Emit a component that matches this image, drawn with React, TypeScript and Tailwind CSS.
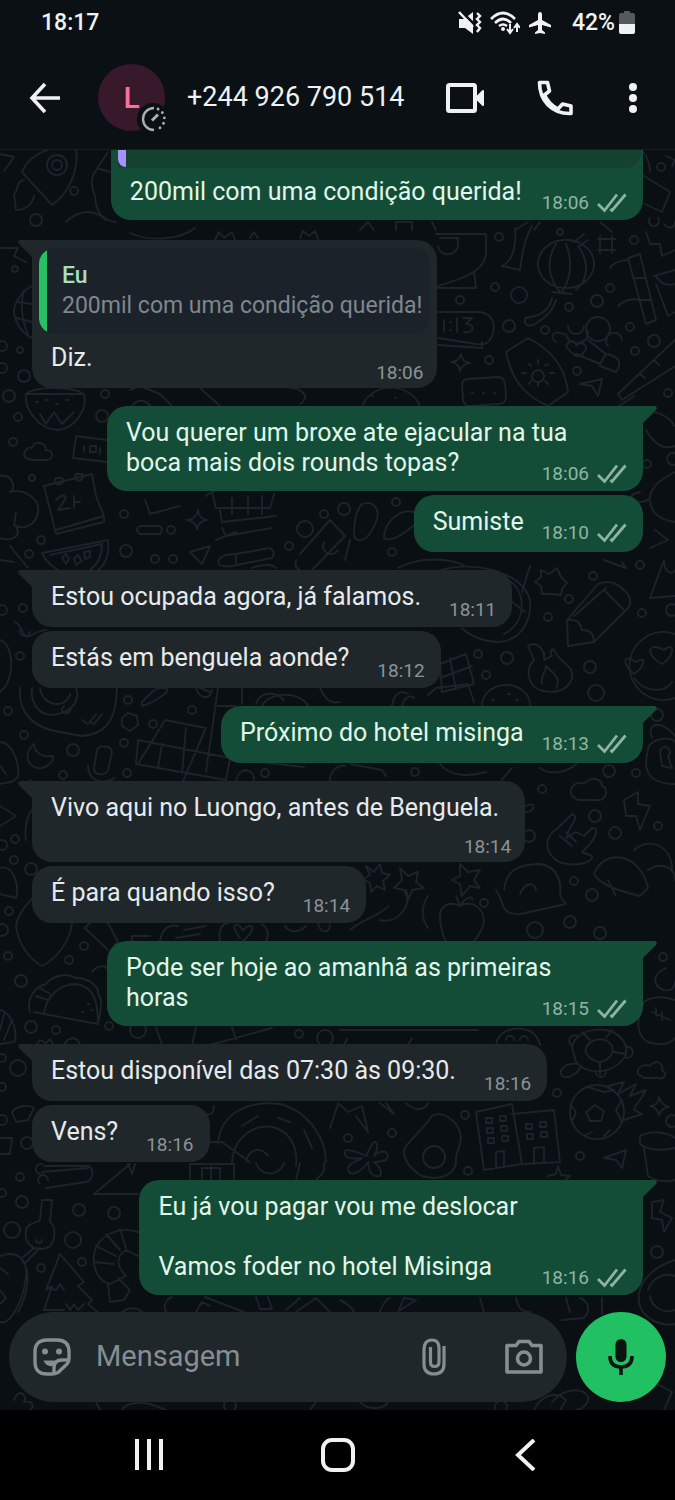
import type { ReactNode } from "react";
import { clsx } from "clsx";

type Message = {
  text: string;
  time: string;
  out?: boolean;
  first?: boolean;
  layout?: "row" | "wide" | "stacked";
};

const messages: Message[] = [
  {
    text: "Vou querer um broxe ate ejacular na tua\nboca mais dois rounds topas?",
    time: "18:06",
    out: true,
    first: true,
    layout: "wide",
  },
  { text: "Sumiste", time: "18:10", out: true },
  { text: "Estou ocupada agora, já falamos.", time: "18:11", first: true },
  { text: "Estás em benguela aonde?", time: "18:12" },
  { text: "Próximo do hotel misinga", time: "18:13", out: true, first: true },
  {
    text: "Vivo aqui no Luongo, antes de Benguela.",
    time: "18:14",
    first: true,
    layout: "stacked",
  },
  { text: "É para quando isso?", time: "18:14" },
  {
    text: "Pode ser hoje ao amanhã as primeiras\nhoras",
    time: "18:15",
    out: true,
    first: true,
    layout: "wide",
  },
  { text: "Estou disponível das 07:30 às 09:30.", time: "18:16", first: true },
  { text: "Vens?", time: "18:16" },
  {
    text: "Eu já vou pagar vou me deslocar\n\nVamos foder no hotel Misinga",
    time: "18:16",
    out: true,
    first: true,
  },
];

// x, y, radius
const bubbles = [
  [74, 191, 4], [36, 220, 6], [15, 269, 3], [20, 350, 3], [24, 376, 6], [9, 396, 6], [105, 394, 4], [102, 416, 6],
  [18, 417, 4], [13, 442, 4], [32, 478, 3], [2, 346, 5], [2, 368, 5], [499, 237, 4], [460, 300, 4], [495, 287, 4],
  [519, 295, 8], [509, 326, 6], [545, 330, 4], [569, 307, 4], [597, 301, 6], [610, 288, 4], [630, 327, 4],
  [654, 341, 6], [635, 351, 4], [577, 371, 4], [489, 360, 4], [668, 393, 4], [634, 240, 4], [560, 232, 3],
  [344, 509, 6], [396, 502, 4], [392, 552, 4], [647, 464, 4], [673, 459, 6], [661, 167, 4], [124, 514, 4],
  [41, 540, 4], [29, 554, 4], [126, 551, 6], [171, 530, 4], [155, 559, 4], [173, 559, 4], [289, 546, 4],
  [305, 529, 8], [324, 514, 4], [23, 608, 4], [2, 610, 5], [20, 656, 4], [128, 700, 4], [8, 711, 4], [24, 735, 4],
  [73, 750, 6], [124, 743, 4], [153, 724, 4], [192, 710, 4], [63, 775, 4], [127, 773, 4], [265, 773, 4],
  [593, 576, 4], [569, 599, 4], [642, 613, 4], [548, 617, 4], [478, 654, 4], [507, 658, 6], [486, 675, 4],
  [590, 667, 6], [596, 693, 8], [640, 565, 4], [672, 610, 6], [657, 715, 6], [609, 771, 6], [636, 773, 4],
  [542, 789, 4], [595, 816, 6], [615, 833, 6], [658, 826, 4], [574, 881, 4], [415, 772, 4], [529, 836, 6],
  [15, 839, 4], [2, 845, 5], [14, 860, 4], [31, 869, 6], [9, 911, 4], [2, 930, 6], [8, 956, 4], [84, 946, 4],
  [69, 960, 4], [21, 981, 6], [31, 1027, 6], [56, 1030, 4], [109, 1026, 4], [138, 1030, 8], [299, 1034, 4],
  [325, 1038, 8], [18, 1068, 8], [2, 1058, 4], [2, 1087, 4], [27, 1143, 6], [2, 1120, 5], [484, 903, 4],
  [592, 895, 6], [535, 930, 8], [570, 922, 6], [600, 933, 6], [663, 957, 4], [557, 1093, 4], [465, 1115, 4],
  [348, 1138, 4], [392, 1133, 4], [468, 1171, 4], [580, 1156, 4], [672, 1121, 6], [20, 1177, 4], [22, 1202, 6],
  [79, 1210, 6], [114, 1213, 6], [12, 1230, 8], [73, 1240, 8], [82, 1262, 4], [41, 1268, 4], [2, 1193, 4],
  [657, 1252, 6],
];

const doodles = [
  // rocket, paper plane and cactus
  "M22 172C28 158 40 151 55 148H76C79 172 68 194 52 205ZM22 172L52 205M67 165a10 10 0 1 1-20 0a10 10 0 1 1 20 0M62 165a5 5 0 1 1-10 0a5 5 0 1 1 10 0M24 180C14 182 20 190 14 194L16 210C24 210 32 206 34 196M0 154L14 157L4 171",
  "M95 172C90 178 92 190 95 196C96 212 102 220 116 222M95 172L108 152M97 168L110 172M66 222C80 208 96 210 106 220",
  // globe and stars on the left
  "M32 286C20 292 14 304 14 312C16 326 24 334 32 338M18 302L32 304M16 318L32 322M24 290C20 304 22 322 28 334M0 248H18L14 256L26 262",
  "M130 233C150 242 180 240 195 228M215 240l4-8 5 6 8-6 3 8M250 238l4-6 4 6M300 238l3-7 6 5 6-5 3 8",
  // monitor and megaphone
  "M436 234H486V252C486 268 472 276 438 286M438 288H476L474 272M440 238H458V246C456 256 440 258 438 246M515 228C517 246 512 262 502 266L520 270C522 256 524 240 532 226",
  // paper lantern
  "M538 262A28 24 0 1 0 594 266A28 24 0 1 0 538 262M556 244C546 260 548 278 560 292M566 244C572 258 572 278 562 292M578 246C590 262 588 280 576 290M574 242l10-8M580 246l8-6M552 292L572 294M552 298C550 308 542 316 526 318C522 326 530 328 538 322C548 316 554 308 556 300",
  // sparkle square and maple leaf
  "M600 236V253M612 236V253M598 239H615M598 250H615M646 232l4 12 10 0 2 12 13-6",
  // bamboo
  "M628 258L640 254L656 320L646 324ZM634 278H646M638 300H650M628 260C620 260 612 264 610 268M618 306C624 300 632 298 640 300M654 276L675 270M656 284L668 316L675 312M656 276C660 284 668 286 675 284",
  // alarm clock face
  "M438 312H480C494 314 496 326 492 336C488 346 482 344 476 344L438 338M438 345L482 348V342M444 320V332M450 322h1M450 330h1M457 318V332M463 318H472L466 324C476 324 474 334 464 332",
  // flowers
  "M566 334a11 10 0 1 0 22-2M584 326a8 8 0 1 1-16 0M610 328a12 12 0 1 0-24 2a12 12 0 0 0 24-2M622 340a8 8 0 1 0-14 6M556 342C548 336 554 330 564 334M566 346C570 338 578 342 576 346C582 340 590 346 584 352C580 358 574 358 566 346M588 340L606 354L600 364L576 354M606 354C620 356 622 364 616 372L600 366",
  // sun cream
  "M506 352L528 338C556 352 566 372 568 392L548 406C526 396 512 382 506 352M533 373a6 6 0 1 0 10 0a6 6 0 0 0-10 0M526 373h-4M554 373h-4M538 360v4M538 386v-4M529 364l2 2M548 384l-3-3M548 364l-3 2M529 384l2-3",
  "M462 383Q464 379 468 379L498 377Q504 377 505 384L506 396Q506 403 500 404L470 406Q464 406 463 400ZM472 393h1M483 393h1M494 393h1M451 362q8 0 10-8q1 8 9 9q-8 1-10 8q-1-8-9-9M580 384L602 379L598 396L592 386Z",
  "M675 340L618 394L622 400L675 366M640 374l5 4M654 360l5 5M616 408L634 396M362 407A30 26 0 0 1 420 407M372 396h1M395 398h1",
  // fruit bowl, cloud and ticket
  "M26 394L84 394C88 408 76 428 58 430C40 430 24 410 26 394M26 394C36 386 72 386 84 394M36 402h2M46 400h2M56 404h2M66 400h2M40 414L46 424L54 412L62 424L74 412",
  "M26 458C22 454 26 446 32 448C34 440 46 442 46 450C54 450 54 460 46 460H32ZM107 440L76 436L73 458L107 462M84 446v6M90 446h6v6h-6ZM100 448v6",
  "M44 486L92 474L96 496L104 516L104 522L56 534ZM56 530L104 516M56 478a4 4 0 1 0 6 0ZM76 474a4 4 0 1 0 6 0ZM56 500Q64 492 66 498L58 510L70 508M74 496V508M74 502H80",
  "M0 476C14 474 16 490 10 492C26 488 40 500 38 512C36 524 26 530 16 526C22 536 12 542 0 538M16 512L14 526M0 560L14 562M10 546L28 568M132 406C140 396 150 402 152 410M130 390L140 386L160 394L172 406M200 388L220 406M290 388C300 388 312 396 300 404",
  // watermelon
  "M42 553L108 540C110 556 104 566 98 570M50 555L102 544C102 556 98 564 90 570M42 553C46 562 52 566 58 570M62 558l4-4 3 5-3 5ZM74 558l4-3 4 6-6 4ZM84 552l6-1 0 6-5 2Z",
  "M140 526H160Q164 530 160 534H140Q134 530 140 526M186 520q10 0 12-10q1 9 9 10q-8 1-10 9q-1-8-11-9M190 552L210 546L202 564ZM145 500L150 514L180 506",
  // easel and tools
  "M212 492L216 508H270L274 494M220 510L222 522L276 516M222 528L226 536L272 528M232 498V514M248 496V514M262 496V514M216 540L236 532M218 562Q220 554 236 554L270 548Q276 552 272 558L232 566Q220 568 218 562M236 554V565M252 568Q270 562 276 568",
  "M300 554L330 520L345 536L312 570M324 542a8 8 0 1 0 14 8M296 560q-2 8 4 10M350 540L345 560M362 504C376 500 382 512 374 526C368 540 358 544 354 536C354 520 356 510 362 504M384 538C384 522 400 508 414 512M384 538C392 544 408 530 416 524",
  "M206 496C210 492 214 492 216 490M640 492C620 496 640 508 650 498C650 486 666 476 675 472M650 500C650 512 660 520 675 522M655 530L668 540L650 548M646 412C660 410 672 420 674 426M646 430C654 444 664 450 675 446",
  // compass, pencil
  "M438 571C470 560 522 570 530 600C532 622 520 640 500 642C484 642 470 636 462 628M508 580C524 588 530 620 504 634M398 568C420 556 450 558 465 566M510 600L525 612M530 566L522 592",
  "M567 620L598 584Q612 578 624 590Q634 600 628 608L594 642L568 646ZM604 590L624 610M574 616L606 588M596 640L626 610M567 620Q580 618 582 630Q594 630 594 642",
  "M541 570l8 4 8-6 4 9 6 6-5 6-1 6-9-1-10 0-1-8-6-4 6-5ZM650 598L664 560M650 598L675 596M664 560C664 572 672 576 675 570M604 560L626 568L622 562",
  // flame
  "M528 646C536 640 546 650 544 660L552 656C548 650 554 648 554 650C560 664 574 664 572 678C568 692 552 694 540 690C526 684 526 668 534 660L528 646M542 684C540 676 546 672 546 666C552 672 562 678 556 688",
  // heart eyed face
  "M675 634A34 34 0 1 0 675 698M636 662C620 652 624 666 634 674C644 668 648 654 636 662M664 650C644 640 648 658 662 664C674 658 676 640 664 650M634 678C644 692 664 694 672 682",
  "M428 695L436 688L468 684L474 702M440 664L466 654L474 684L442 692ZM450 658L456 690M440 678L472 666M392 706C394 692 402 690 408 694M402 706C404 698 410 694 414 698M482 705A24 20 0 0 1 530 705M492 700h2M508 694h2M516 700h2",
  // padlock and shield
  "M648 748C652 738 672 736 675 742M648 750C642 772 650 784 675 784M652 738C646 724 660 718 675 736M660 752a5 5 0 1 1 8 4L672 768L662 766Z",
  // washing machine and moon
  "M20 688C18 714 34 728 60 732L82 736C104 734 114 722 116 700L117 688M32 688C30 706 42 718 58 714C74 710 80 700 76 688M40 688C42 706 66 710 70 694M64 706a4 4 0 1 0 6 2M82 720l6 4 8-10M90 722l4 2 8-10M0 640C14 644 16 680 0 692M15 622C24 626 22 640 30 636C38 630 40 632 46 630M20 630a5 5 0 1 0 10 2",
  "M34 744C22 754 28 770 42 768C50 766 54 760 53 756C42 758 34 752 34 744M0 742C12 742 20 764 18 776C14 784 6 782 0 784M0 766L6 774M97 750C100 744 112 746 112 752L108 770C106 776 94 776 94 768ZM88 766C88 780 102 786 114 778",
  // polygon, chili, squares
  "M122 718l6-5 9 3 1 9-8 6-8-5ZM142 702C150 694 156 686 164 688C176 690 150 704 142 706ZM200 688L210 692M196 688C200 700 210 700 212 690M165 720L206 728L180 788M165 720L138 764M138 740L230 758L226 780L136 764ZM162 744L158 768M186 728L182 774M218 688L206 772M218 706L236 706M242 688V704M256 704C260 692 274 690 284 700M262 706C268 692 300 690 308 706M320 688C326 700 330 704 340 702",
  "M236 780C240 766 254 768 254 780M330 780C330 770 340 764 345 766M260 762L304 767M0 806L16 816L0 826M26 840C24 826 28 812 34 808M30 780l4 4M440 764C452 778 470 776 486 772M500 782L512 768M540 768C550 776 568 772 576 764M350 764L382 770L386 776",
  // cloud, bolt, rock hand
  "M572 796C568 788 576 780 584 784C590 776 602 778 602 786C610 788 606 802 596 800H578ZM624 800L638 792L638 804L650 806L640 830L636 816L626 816Z",
  "M558 828L572 814C578 816 574 822 570 828L566 838L576 832L584 836L592 828C600 828 596 836 590 844L582 852L592 856C594 864 568 868 556 860C546 852 542 838 558 828M560 836L572 846M566 832L576 842M526 806C536 800 536 812 526 812",
  "M594 874C604 848 640 852 648 888L640 896C624 892 600 886 594 874M634 850C650 836 672 846 672 870M648 870C660 862 675 866 675 880M608 880L616 896M504 890C506 872 516 864 540 864C556 866 562 880 560 896L566 904L520 914C500 916 504 900 496 890M520 894C524 884 534 880 536 890",
  // stars and flowers in the middle
  "M366 866l8 6 6-8 2 9 8 2-7 6 2 9-8-4-6 6-1-9-7-4 7-4ZM400 868l8 8 10-4-2 10 8 6-12 2-4 10-4-10-10-2 8-8ZM460 864l8 8 12-2-6 10 6 8-10-2-8 10-2-12-8-4 8-4ZM440 915C440 908 448 900 460 906C470 900 484 906 484 922C482 932 478 936 474 941M440 915C440 926 442 934 446 941M460 906L456 896M460 906C466 896 474 896 472 900M380 920C400 924 412 904 406 890M388 906C380 916 364 918 350 930M428 896C420 908 422 920 428 928",
  "M0 868C12 864 20 884 16 898L0 894M16 926C18 910 32 900 34 896M16 926C18 944 30 960 42 966C58 958 70 940 72 924M85 928L108 950M85 928L90 923M108 923L118 942L114 946M132 941V936H150M160 941C162 928 170 924 178 926M176 938L200 934M184 930L206 926M220 941C218 928 222 924 228 923M240 938C228 922 238 922 243 930C250 922 260 926 243 941M262 924C270 930 268 938 266 941M285 926C290 934 300 932 306 926M318 923C320 934 330 934 330 924",
  // taco
  "M30 1012C26 998 36 986 46 984C52 976 66 972 76 978C90 978 100 988 98 994C104 1000 100 1012 98 1024L44 1014M44 1014C46 996 60 984 76 984C92 986 98 998 98 1024M34 1012L44 1014M36 996L48 1000M40 988L50 994M88 1004h1M82 1012h1M92 1010h1M92 972C98 964 108 966 106 968M0 1010C14 1014 18 1036 14 1042L0 1044M4 1014L0 1030M12 1020L4 1040M36 1045l4-5 6 3 4-4 4 6M64 1045C68 1036 78 1036 80 1045",
  "M156 1027L162 1045M196 1027L192 1045M210 1045L272 1028M232 1027L236 1040M340 1030H478M344 1045l3-6M408 1045l4-7M496 1045C498 1024 536 1022 540 1045M506 1040a4 4 0 1 1 8 0M520 1040a4 4 0 1 1 8 0",
  // turtle
  "M572 1048C574 1034 590 1028 606 1030C624 1034 630 1048 624 1058C612 1074 588 1076 576 1062ZM586 1048C590 1038 606 1036 612 1046C616 1056 602 1066 594 1060C588 1058 584 1052 586 1048M578 1036a5 5 0 1 0-6 10M626 1046C636 1048 634 1058 626 1058M578 1064C566 1062 558 1070 562 1076C570 1080 578 1072 580 1068M596 1072a5 5 0 1 0 10 0M590 1040L582 1032M606 1038L612 1030M614 1052L626 1054M600 1062V1074",
  "M644 1002C652 996 664 996 675 1000M644 1002C636 1020 636 1036 648 1042C660 1046 670 1044 675 1038M652 1012L670 1020M656 1008v8M662 1012v8M666 968C652 974 652 986 664 990C672 992 675 986 675 982M638 1074C636 1066 646 1064 650 1066C656 1058 664 1064 662 1070C668 1074 664 1080 658 1078H644Z",
  // meteor football
  "M570 1112A27 27 0 1 0 624 1112A27 27 0 1 0 570 1112M586 1112l9-7 9 6-3 10h-11ZM588 1087L604 1092L614 1090M570 1104L576 1112L572 1122M622 1100L616 1110L622 1122M584 1136l8-4M604 1136l6-6M608 1086L624 1082L618 1094L636 1084L630 1096L646 1090C640 1102 634 1106 634 1110L642 1114L624 1120M650 1106q8 0 9-9q2 8 10 10q-8 1-10 8q-2-8-9-9",
  // buildings
  "M476 1112L512 1104L522 1164L484 1170ZM512 1114L554 1110L560 1162L522 1164M496 1168V1152L504 1151V1167M534 1164V1148L544 1147V1163M486 1118h6v5h-6ZM500 1116h6v5h-6ZM487 1128h6v5h-6ZM501 1126h6v5h-6ZM488 1138h6v5h-6ZM502 1136h6v5h-6ZM526 1124h6v5h-6ZM540 1122h6v5h-6ZM527 1134h6v5h-6ZM541 1132h6v5h-6Z",
  // fried egg
  "M432 1116C442 1110 456 1120 460 1132C464 1144 454 1152 456 1164C452 1178 436 1180 422 1176C408 1168 400 1154 406 1146C414 1136 422 1130 432 1116M423 1157a11 11 0 1 0 22 0a11 11 0 1 0-22 0",
  "M372 1144C376 1138 380 1146 374 1156C382 1148 392 1152 386 1160C380 1162 376 1162 374 1162C382 1168 384 1178 376 1176C370 1176 368 1166 368 1162C358 1176 348 1176 348 1168C350 1162 360 1160 362 1158C348 1160 342 1156 346 1150C354 1150 362 1154 366 1156ZM338 1103L348 1112L362 1106L368 1132L356 1116M380 1103L394 1114L386 1103M406 1103C412 1110 424 1112 428 1103M604 1158L626 1150L622 1168L616 1160ZM548 1176l8-2 2-8 3 9 9 1-7 6",
  "M640 1136C650 1130 668 1132 675 1138M640 1136V1144C650 1152 668 1150 675 1148M644 1148L648 1176C656 1182 668 1182 675 1180M652 1202L664 1200L660 1212L672 1218L664 1232L662 1220L652 1218Z",
  // spiral, tracks
  "M218 1144C220 1112 250 1100 280 1104C310 1112 326 1140 326 1162M232 1162C234 1136 256 1122 276 1128C292 1134 298 1150 296 1166M246 1162C250 1146 262 1148 268 1156M242 1126L258 1116M278 1118L290 1122M304 1130L312 1148M206 1142H222L250 1162M196 1106C202 1114 214 1120 214 1106M330 1128L338 1104M12 1112C16 1106 28 1104 34 1108L28 1120L16 1122ZM0 1138H12L10 1154H0",
  "M42 1164a5 5 0 1 0-2 10M44 1166H88C94 1168 94 1180 86 1182L46 1188M42 1172L88 1168M48 1180a5 5 0 1 0-8 4M130 1164L94 1194H138M128 1164l4 10 3-10M190 1180V1164H234V1180M202 1180V1168H220V1180M211 1166V1180M256 1163C262 1178 280 1176 284 1163M300 1163L296 1180M324 1163C326 1172 320 1176 316 1180",
  // guitar, tree, shrimp
  "M42 1200H52L50 1222C58 1228 54 1248 46 1248C34 1252 24 1244 26 1230C28 1222 36 1224 40 1220ZM36 1240a3 3 0 1 0 6 0M34 1248L22 1258M40 1248L26 1262M0 1256C16 1250 28 1258 26 1276C24 1300 10 1326 0 1322M22 1260C30 1270 30 1290 18 1312M0 1268l8 6M0 1290l6 8-6 6",
  "M60 1254L46 1290L52 1286L44 1310H64M60 1254L84 1282L78 1286L92 1300L88 1304L100 1314M48 1288l8 2 4-6 4 6M66 1304l4 6 4-6 4 6 6-6",
  "M138 1232C120 1226 98 1234 94 1254C92 1270 100 1282 110 1284L126 1276C116 1266 116 1256 126 1250L138 1256M96 1246L116 1256M106 1234L120 1250M120 1229L126 1248M94 1262L114 1264M108 1284L110 1302L124 1300L130 1290L118 1278M122 1312C130 1306 138 1308 142 1312",
  // strip between last message and input
  "M166 1312C162 1304 168 1298 172 1297M196 1312l6-10 8 4M205 1297L244 1312M256 1297l4 12h12l-4-12M286 1310L300 1298M296 1312L316 1298L330 1312M340 1300C350 1304 354 1312 354 1312M380 1312C382 1304 388 1298 390 1298M398 1312L404 1298L416 1300L400 1310M480 1298L484 1312M516 1298C518 1310 524 1312 530 1312M566 1298L570 1312M580 1298C590 1302 590 1312 584 1318L562 1320M602 1298V1314",
  "M675 1260C650 1268 634 1286 640 1306C646 1322 664 1326 675 1324M648 1290C652 1278 664 1272 675 1276M650 1296C652 1308 664 1314 675 1310M14 1400C18 1388 28 1394 24 1402C34 1400 34 1408 30 1410M96 1402L100 1410M122 1410C126 1402 140 1402 150 1404L166 1410M226 1410a6 6 0 1 1 8 0M310 1410L316 1402M360 1402C366 1410 384 1410 388 1402M496 1410a6 6 0 1 1 10 0M534 1410C540 1396 556 1390 566 1400L560 1410M552 1402C562 1390 580 1386 588 1396C590 1404 580 1410 576 1410M650 1380L672 1392L664 1410",
  // hat and table beside the top bubble
  "M643 152C648 158 650 166 650 172M666 156L675 160L672 166M644 176L670 192L662 212L645 204M650 218a5 5 0 1 0 8 0M360 230L368 222L374 230M396 230V222H412V230M432 222L436 230M515 230L528 222M540 222L534 230M600 222L612 232M664 224C668 230 675 228 675 222",
];

const Wallpaper = () => (
  <svg
    className="absolute inset-0 h-full w-full"
    viewBox="0 150 675 1260"
    preserveAspectRatio="xMidYMin slice"
    fill="none"
    stroke="#1e2329"
    strokeWidth="1.9"
    strokeLinejoin="round"
    strokeLinecap="round"
    aria-hidden
  >
    {bubbles.map(([x, y, r]) => (
      <circle key={`${x}-${y}`} cx={x} cy={y} r={r} />
    ))}
    {doodles.map((d) => (
      <path key={d} d={d} />
    ))}
  </svg>
);

const Ticks = () => (
  <svg className="h-5 w-[30px]" viewBox="0 0 30 20" fill="none" stroke="currentColor" strokeWidth="2.8" aria-label="Entregue">
    <path d="M1 11L7.5 17.5L20 1.5M13.5 16L15 17.5L28.5 1.5" />
  </svg>
);

const Meta = ({ time, out }: { time: string; out?: boolean }) => (
  <span
    className={clsx(
      "flex items-center gap-2 text-[19px] leading-[22px]",
      out ? "text-[#8fb5a2]" : "text-[#8b9397]",
    )}
  >
    <time>{time}</time>
    {out && <Ticks />}
  </span>
);

const Tail = ({ out }: { out?: boolean }) => (
  <svg
    className={clsx("absolute top-0 h-[18px] w-[14px]", out ? "left-full" : "right-full")}
    viewBox="0 0 14 18"
    fill={out ? "#144d37" : "#1f272a"}
    aria-hidden
  >
    {out ? <path d="M0 0H12Q15 1 13 4L3 14Q0 16 0 18Z" /> : <path d="M14 0H2Q-1 1 1 4L11 14Q14 16 14 18Z" />}
  </svg>
);

type BubbleProps = {
  out?: boolean;
  first?: boolean;
  className?: string;
  children: ReactNode;
};

const Bubble = ({ out, first, className, children }: BubbleProps) => (
  <li
    className={clsx(
      "relative min-h-[57px] max-w-full rounded-[20px]",
      out ? "self-end bg-[#144d37] text-[#e0f7ea]" : "self-start bg-[#1f272a] text-[#e6eaec]",
      first && (out ? "rounded-tr-none" : "rounded-tl-none"),
      className,
    )}
  >
    {first && <Tail out={out} />}
    {children}
  </li>
);

const MessageBubble = ({ text, time, out, first, layout = "row" }: Message) => {
  if (layout === "wide") {
    // the time shares the last line only
    const lines = text.split("\n");
    const last = lines.pop();

    return (
      <Bubble out={out} first={first} className={clsx(first && "mt-[14px]", "w-[536px]")}>
        <div className="pt-3 pr-4 pl-[19px] leading-[30px]">
          {lines.map((line) => (
            <p key={line}>{line}</p>
          ))}
          <div className="flex justify-between">
            <p className="pb-[13px]">{last}</p>
            <div className="self-end pb-[6px]">
              <Meta time={time} out={out} />
            </div>
          </div>
        </div>
      </Bubble>
    );
  }

  return (
    <Bubble out={out} first={first} className={clsx(first && "mt-[14px]")}>
      <div
        className={clsx(
          "pl-[19px]",
          layout === "stacked" ? "flex flex-col pr-[14px]" : "flex pr-4",
          layout === "row" && !out && "gap-7",
          layout === "row" && out && (text.includes("\n") ? "gap-6" : "gap-[18px]"),
        )}
      >
        <p className={clsx("pt-3 pb-[13px] leading-[30px] whitespace-pre-line", layout === "stacked" && "pr-3")}>
          {text}
        </p>
        <div className={clsx("self-end", out ? "pb-[6px]" : "pb-1")}>
          <Meta time={time} out={out} />
        </div>
      </div>
    </Bubble>
  );
};

const StatusBar = () => (
  <div className="flex h-[46px] items-center justify-between pr-10 pl-[41px] text-[23px] font-medium">
    <time>18:17</time>
    <div className="flex items-center">
      <svg className="h-6 w-6" viewBox="0 0 24 24" fill="currentColor" aria-label="Som desativado">
        <path d="M1 8H6L15 1V23L7 17H1Z" />
        <path d="M3 0L18 15" stroke="#0b1014" strokeWidth="2.5" />
        <path d="M1 1L15 16" stroke="currentColor" strokeWidth="2.5" />
        <path d="M19 2l3 3-3 3 3 3-3 3 3 3-3 4" fill="none" stroke="currentColor" strokeWidth="2.4" />
      </svg>
      <svg className="ml-2 h-6 w-[30px]" viewBox="0 0 30 24" fill="none" stroke="currentColor" strokeWidth="2.6" aria-label="Wi-Fi">
        <path d="M1 8Q13 -4 25 8M5 12Q13 4 21 12M9 15Q13 12 17 15" />
        <circle cx="13" cy="18" r="2" fill="currentColor" stroke="none" />
        <path d="M20 13V21M17 18l3 4 3-4M27 21V14M24 17l3-4 3 4" strokeWidth="2" />
      </svg>
      <svg className="ml-2 h-6 w-6" viewBox="0 0 24 24" fill="currentColor" aria-label="Modo de voo">
        <path d="M12 1Q14 1 14 4V9L23 14V16.5L14 14V19L17 21.5V23L12 22L7 23V21.5L10 19V14L1 16.5V14L10 9V4Q10 1 12 1Z" />
      </svg>
      <span className="ml-5">42%</span>
      <svg className="ml-1 h-6 w-4" viewBox="0 0 16 24" aria-hidden>
        <path d="M5 0H11V2H14Q16 2 16 4V14H0V4Q0 2 2 2H5Z" fill="#56595c" />
        <path d="M0 13H16V21Q16 23 14 23H2Q0 23 0 21Z" fill="currentColor" />
      </svg>
    </div>
  </div>
);

const ChatHeader = () => (
  <div className="flex h-[103px] items-center pr-8 pl-[29px]">
    <button type="button" aria-label="Voltar">
      <svg className="size-8" viewBox="0 0 32 32" fill="none" stroke="currentColor" strokeWidth="3.6">
        <path d="M31 16H3M16 2L3 16L16 30" />
      </svg>
    </button>
    <div className="relative ml-[37px] flex size-[67px] items-center justify-center rounded-full bg-[#38182b] text-[30px] font-medium text-[#ff6f9c]">
      L
      <span className="absolute -right-1 -bottom-1 flex size-8 items-center justify-center rounded-full bg-[#0b1014] text-[#a9b0b4]">
        <svg className="size-[26px]" viewBox="0 0 26 26" fill="none" stroke="currentColor" strokeWidth="2.4" aria-label="Mensagens temporárias">
          <path d="M14 2A11 11 0 1 0 14 24" />
          <path d="M18 3A11 11 0 0 1 18 23" strokeDasharray="0.1 5.5" strokeLinecap="round" strokeWidth="2.8" />
          <path d="M12 14.5L18 8.5" strokeWidth="3" />
        </svg>
      </span>
    </div>
    <h1 className="ml-[22px] flex-1 text-[27px] whitespace-nowrap">+244 926 790 514</h1>
    <button type="button" aria-label="Videochamada">
      <svg className="h-8 w-[39px]" viewBox="0 0 39 32" fill="none" stroke="currentColor" strokeWidth="4" strokeLinejoin="round">
        <rect x="2" y="3" width="27" height="26" rx="1.5" />
        <path d="M30 16L37 9V23Z" fill="currentColor" strokeWidth="2" />
      </svg>
    </button>
    <button type="button" aria-label="Chamada" className="ml-[52px]">
      <svg className="size-[36px]" viewBox="0 0 36 36" fill="none" stroke="currentColor" strokeWidth="3.6" strokeLinejoin="round">
        <path d="M2.5 2.5H10.5L12.5 11L7.5 15Q12 24.5 21 29L25.5 24L34 26V33.5Q20 34 11 25Q2.5 16 2.5 2.5Z" />
      </svg>
    </button>
    <button type="button" aria-label="Mais opções" className="ml-[50px]">
      <svg className="h-8 w-5" viewBox="0 0 20 32" fill="currentColor">
        <circle cx="10" cy="5" r="4" />
        <circle cx="10" cy="16" r="4" />
        <circle cx="10" cy="27" r="4" />
      </svg>
    </button>
  </div>
);

const Composer = () => (
  <form className="flex items-center gap-[9px] px-[9px] pt-4 pb-2">
    <div className="flex h-[90px] min-w-0 flex-1 items-center rounded-full bg-[#1f272a] px-6 text-[#868e92]">
      <button type="button" aria-label="Figurinhas">
        <svg className="size-[38px]" viewBox="0 0 38 38" fill="none" stroke="currentColor" strokeWidth="3.4">
          <path d="M14 2H24Q36 2 36 14V21Q36 24 34 26L25 34.5Q22 36 19 36H14Q2 36 2 24V14Q2 2 14 2Z" />
          <path d="M21 36V30Q21 22 29 22H36" />
          <path d="M10.5 22.5H22L20 28Q13 29 10.5 22.5Z" fill="currentColor" stroke="none" />
          <circle cx="12" cy="13.5" r="3" fill="currentColor" stroke="none" />
          <circle cx="26" cy="13.5" r="3" fill="currentColor" stroke="none" />
        </svg>
      </button>
      <input
        type="text"
        aria-label="Mensagem"
        placeholder="Mensagem"
        className="ml-[25px] h-10 w-0 min-w-0 flex-1 bg-transparent text-[29px] outline-none placeholder:text-[#868e92]"
      />
      <button type="button" aria-label="Anexar">
        <svg className="h-[38px] w-6" viewBox="0 0 24 38" fill="none" stroke="currentColor" strokeWidth="3.2">
          <path d="M22 8V26Q22 36 12 36Q2 36 2 26V12Q2 2 10 2Q17 2 17 10V24Q17 28.5 12.5 28.5Q8.5 28.5 8.5 24V9" />
        </svg>
      </button>
      <button type="button" aria-label="Câmara" className="ml-[59px]">
        <svg className="size-[38px]" viewBox="0 0 38 38" fill="none" stroke="currentColor" strokeWidth="3.6" strokeLinejoin="round">
          <path d="M2 7.5H11L14 3.5H24L27 7.5H36V34H2Z" />
          <circle cx="19" cy="20.5" r="6.5" />
        </svg>
      </button>
    </div>
    <button
      type="button"
      aria-label="Gravar áudio"
      className="flex size-[90px] shrink-0 items-center justify-center rounded-full bg-[#21c063] text-[#0b1410]"
    >
      <svg className="h-9 w-[26px]" viewBox="0 0 26 36" fill="none" stroke="currentColor" strokeWidth="3.6">
        <rect x="7.5" y="0" width="11" height="23" rx="5.5" fill="currentColor" stroke="none" />
        <path d="M2 17Q2 28 13 28Q24 28 24 17M13 28V36" />
      </svg>
    </button>
  </form>
);

const NavBar = () => (
  <nav className="flex h-[90px] items-center justify-between bg-black px-[132px] text-[#f1f1f1]">
    <button type="button" aria-label="Recentes">
      <svg className="h-8 w-[34px]" viewBox="0 0 34 32" stroke="currentColor" strokeWidth="4">
        <path d="M5 0V31M17 0V31M29 0V31" />
      </svg>
    </button>
    <button type="button" aria-label="Início">
      <svg className="size-[34px]" viewBox="0 0 34 34" fill="none" stroke="currentColor" strokeWidth="4">
        <rect x="2" y="2" width="30" height="30" rx="9" />
      </svg>
    </button>
    <button type="button" aria-label="Anterior">
      <svg className="h-8 w-[34px]" viewBox="0 0 34 32" fill="none" stroke="currentColor" strokeWidth="4">
        <path d="M25 1L9 16L25 31" />
      </svg>
    </button>
  </nav>
);

export default function App() {
  return (
    <div className="flex min-h-screen flex-col bg-[#0b1014] font-['Roboto',sans-serif] text-[#eef2f4]">
      <header className="border-b border-[#171d21]">
        <StatusBar />
        <ChatHeader />
      </header>

      <main className="relative flex flex-1 flex-col justify-between overflow-hidden bg-[#0a0f13]">
        <Wallpaper />

        <ul className="relative flex flex-col gap-1 px-8 text-[25px]">
          <Bubble out className="rounded-t-none">
            <div className="mr-[2px] ml-[7px] flex h-[18px] overflow-hidden rounded-br-2xl bg-[#15422f]">
              <span className="h-[17px] w-2 rounded-bl-full bg-[#a791ff]" />
            </div>
            <div className="flex gap-5 pr-4 pl-[19px]">
              <p className="pt-[9px] pb-[13px] leading-[30px]">200mil com uma condição querida!</p>
              <div className="self-end pb-[6px]">
                <Meta time="18:06" out />
              </div>
            </div>
          </Bubble>

          <Bubble first className="mt-4">
            <blockquote className="mx-[7px] mt-2 flex overflow-hidden rounded-2xl bg-[#1b222a]">
              <span className="w-2 bg-[#27c065]" />
              <div className="py-[13px] pr-2 pl-[15px] leading-[30px]">
                <p className="text-[23px] font-medium text-[#a5dfc0]">Eu</p>
                <p className="text-[23px] text-[#7f878e]">200mil com uma condição querida!</p>
              </div>
            </blockquote>
            <div className="flex justify-between pr-[14px] pl-[19px]">
              <p className="pt-[9px] pb-[15px] leading-[30px]">Diz.</p>
              <div className="self-end pb-1">
                <Meta time="18:06" />
              </div>
            </div>
          </Bubble>

          {messages.map((message) => (
            <MessageBubble key={message.text} {...message} />
          ))}
        </ul>

        <div className="relative">
          <Composer />
        </div>
      </main>

      <NavBar />
    </div>
  );
}
